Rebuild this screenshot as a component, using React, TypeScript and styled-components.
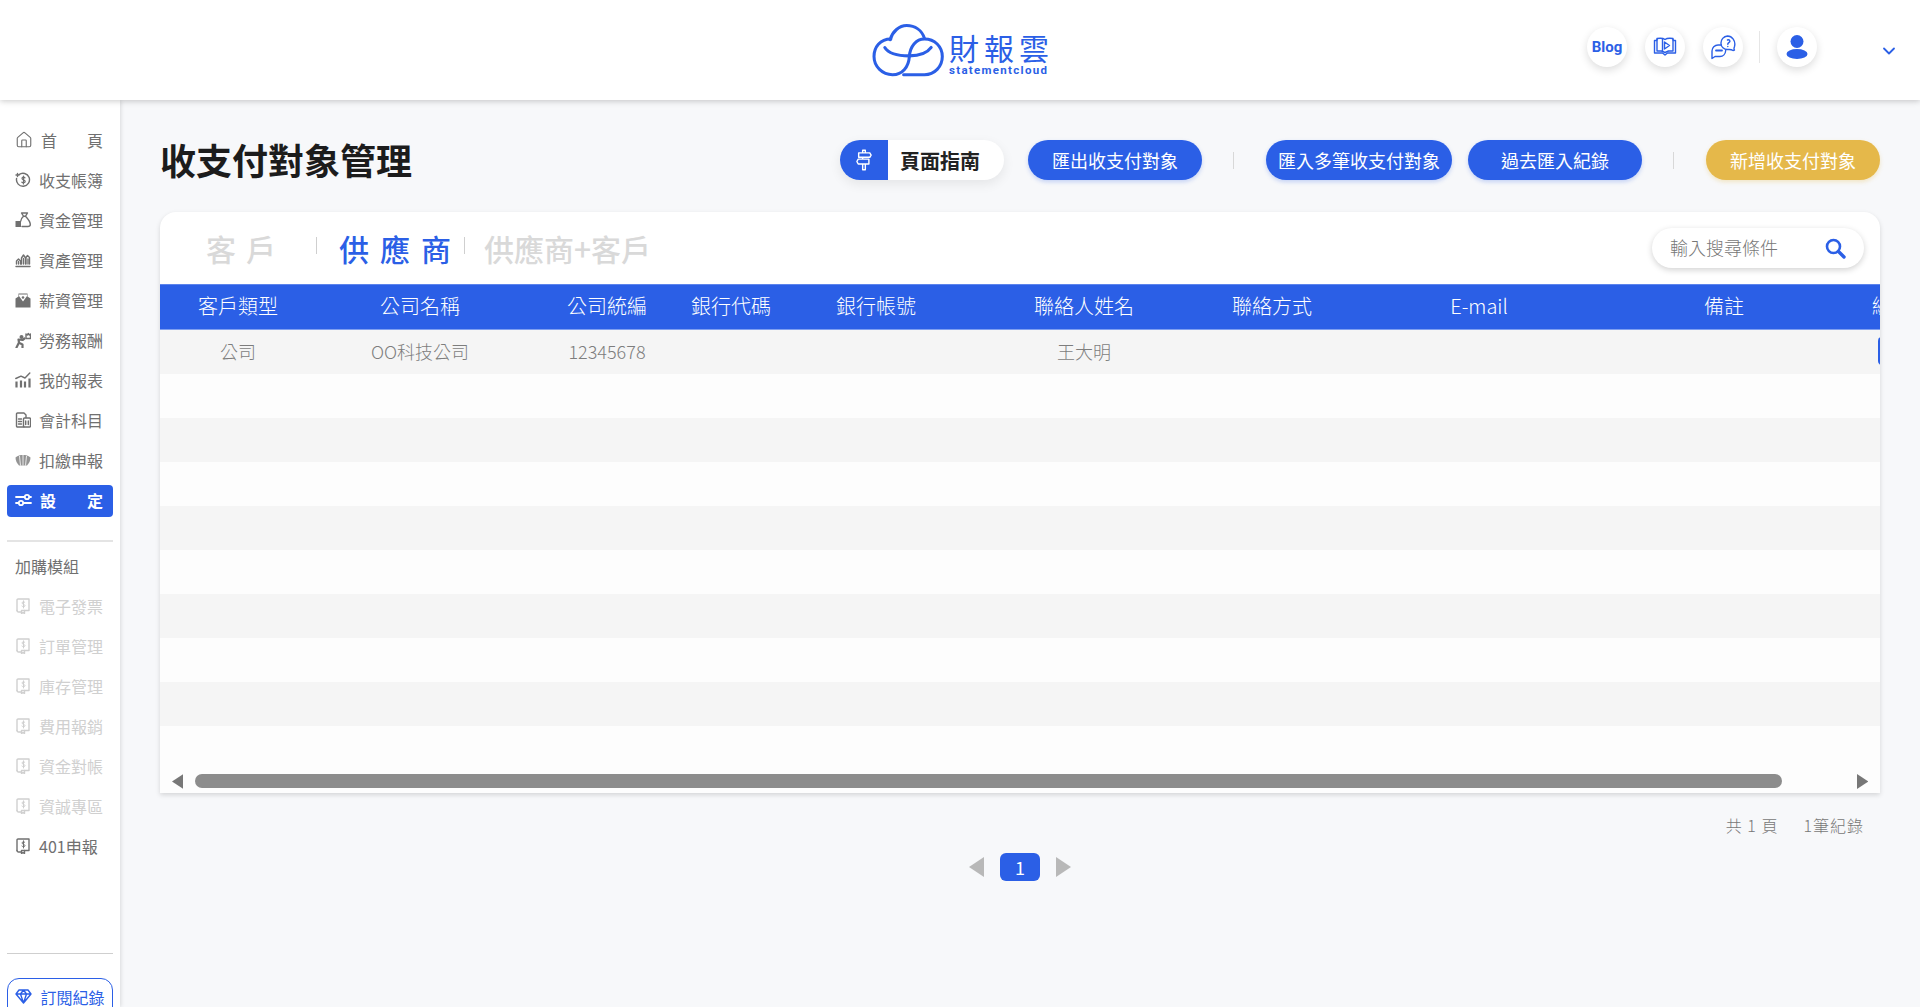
import React from 'react';
import styled, { createGlobalStyle } from 'styled-components';
import { ChevronDown, Home } from 'lucide-react';

const BLUE = '#2b5fe6';
const GOLD = '#e5b84a';

const GlobalStyle = createGlobalStyle`
  html, body {
    margin: 0;
    padding: 0;
    height: 100%;
    overflow: hidden;
    background: #f7f8fa;
    font-family: "Noto Sans CJK TC", "Noto Sans", sans-serif;
  }
  * { box-sizing: border-box; }
`;

const Page = styled.div`
  width: 1920px;
  height: 1007px;
  display: flex;
  flex-direction: column;
  overflow: hidden;
`;

const Header = styled.header`
  height: 100px;
  flex: none;
  display: flex;
  align-items: center;
  background: #fff;
  box-shadow: 0 1px 6px rgba(0, 0, 0, 0.22);
  position: relative;
  z-index: 2;
`;

const LogoLink = styled.a`
  margin-left: 872px;
  display: flex;
  align-items: center;
  gap: 5px;
  color: ${BLUE};
`;

const LogoWords = styled.div`
  display: flex;
  flex-direction: column;
  gap: 2px;
  width: 100px;
  margin-top: 8px;
`;

const LogoTitle = styled.span`
  font-size: 30px;
  line-height: 30px;
  letter-spacing: 5px;
  font-weight: 400;
  white-space: nowrap;
`;

const LogoSub = styled.span`
  font-family: Roboto, sans-serif;
  font-size: 11.5px;
  line-height: 12px;
  font-weight: 700;
  letter-spacing: 1.3px;
  white-space: nowrap;
`;

const HeaderActions = styled.div`
  margin: -6px 0 0 538px;
  display: flex;
  align-items: center;
  gap: 18px;
`;

const RoundButton = styled.button`
  width: 40px;
  height: 40px;
  border: 0;
  padding: 0;
  border-radius: 50%;
  background: #fff;
  color: ${BLUE};
  display: flex;
  align-items: center;
  justify-content: center;
  box-shadow: 0 3px 8px rgba(0, 0, 0, 0.14);
  font-family: Roboto, sans-serif;
  font-size: 15px;
  font-weight: 700;
`;

const HeaderDivider = styled.span`
  width: 1px;
  height: 32px;
  margin: 0 -1px 0 -2px;
  background: #e6e6e6;
`;

const Caret = styled(ChevronDown)`
  margin-left: 62px;
  margin-top: 2px;
  color: ${BLUE};
`;

const Body = styled.div`
  flex: 1;
  min-height: 0;
  display: flex;
`;

const Sidebar = styled.aside`
  width: 120px;
  flex: none;
  padding: 25px 7px 0;
  background: #fff;
  box-shadow: 1px 0 4px rgba(0, 0, 0, 0.12);
  overflow: hidden;
  position: relative;
  z-index: 1;
`;

const NavItem = styled.div<{ $active?: boolean; $muted?: boolean }>`
  height: 32px;
  margin: 0 0 8px;
  padding: 0 10px 2px 8px;
  display: flex;
  align-items: center;
  gap: 8px;
  border-radius: 4px;
  font-size: 16px;
  font-weight: ${(p) => (p.$active ? 700 : 400)};
  color: ${(p) => (p.$active ? '#fff' : p.$muted ? '#d0d0d0' : '#707070')};
  background: ${(p) => (p.$active ? BLUE : 'transparent')};
  svg {
    flex: none;
  }
`;

const NavLabel = styled.span<{ $spread?: boolean }>`
  white-space: nowrap;
  ${(p) => (p.$spread ? 'flex: 1; text-align-last: justify;' : '')}
`;

const NavRule = styled.hr<{ $top: number; $bottom: number; $thick?: boolean }>`
  border: 0;
  height: ${(p) => (p.$thick ? 2 : 1)}px;
  margin: ${(p) => p.$top}px 0 ${(p) => p.$bottom}px;
  background: ${(p) => (p.$thick ? '#e4e4e4' : '#cfcfcf')};
`;

const SectionLabel = styled.div`
  height: 40px;
  margin: 0 0 4px;
  padding: 0 0 2px 8px;
  display: flex;
  align-items: center;
  font-size: 16px;
  color: #707070;
`;

const SubscribeButton = styled.button`
  width: 106px;
  height: 44px;
  padding: 0 0 7px;
  display: flex;
  align-items: center;
  justify-content: center;
  gap: 8px;
  background: #fff;
  border: 1px solid ${BLUE};
  border-radius: 12px;
  color: ${BLUE};
  font-family: inherit;
  font-size: 16px;
`;

const Main = styled.main`
  flex: 1;
  min-width: 0;
  padding: 40px 40px 0;
`;

const Toolbar = styled.div`
  height: 40px;
  display: flex;
  align-items: center;
`;

const PageTitle = styled.h1`
  margin: -3px auto 0 0;
  font-size: 36px;
  line-height: 40px;
  font-weight: 700;
  color: #1c1c1c;
`;

const GuideButton = styled.button`
  width: 164px;
  height: 40px;
  margin-right: 24px;
  padding: 0;
  border: 0;
  border-radius: 20px;
  display: flex;
  align-items: center;
  overflow: hidden;
  background: #fff;
  box-shadow: 0 4px 12px rgba(0, 0, 0, 0.08);
  font-family: inherit;
  font-size: 20px;
  font-weight: 700;
  color: #222;
`;

const GuideIcon = styled.span`
  width: 48px;
  height: 40px;
  margin-right: 12px;
  display: flex;
  align-items: center;
  justify-content: center;
  background: ${BLUE};
`;

const ActionButton = styled.button<{ $gold?: boolean }>`
  min-width: 174px;
  height: 40px;
  padding: 0 12px;
  border: 0;
  border-radius: 20px;
  background: ${(p) => (p.$gold ? GOLD : BLUE)};
  color: #fff;
  font-family: inherit;
  font-size: 18px;
  font-weight: 400;
  box-shadow: 0 2px 4px ${(p) => (p.$gold ? 'rgba(229,184,74,.3)' : 'rgba(43,95,230,.25)')};
`;

const ToolDivider = styled.span`
  width: 1px;
  height: 17px;
  margin: 0 32px 0 31px;
  background: #d8d8d8;
`;

const ButtonGap = styled.span`
  width: 16px;
`;

const Card = styled.section`
  height: 581px;
  margin-top: 32px;
  display: flex;
  flex-direction: column;
  background: #fff;
  border-radius: 16px 16px 0 0;
  box-shadow: 0 2px 5px rgba(0, 0, 0, 0.14);
  overflow: hidden;
`;

const TabRow = styled.div`
  height: 72px;
  flex: none;
  padding: 0 16px 0 46px;
  display: flex;
  align-items: center;
`;

const Tab = styled.span<{ $active?: boolean; $spaced?: boolean }>`
  font-size: 30px;
  line-height: 40px;
  font-weight: 500;
  letter-spacing: ${(p) => (p.$active ? 11 : p.$spaced ? 10 : 0)}px;
  color: ${(p) => (p.$active ? BLUE : '#d9d9d9')};
  white-space: nowrap;
`;

const TabDivider = styled.span<{ $left: number; $right: number }>`
  width: 1px;
  height: 17px;
  margin: -6px ${(p) => p.$right}px 0 ${(p) => p.$left}px;
  background: #cfcfcf;
`;

const SearchBox = styled.label`
  width: 212px;
  height: 40px;
  margin-left: auto;
  padding: 0 18px;
  display: flex;
  align-items: center;
  border-radius: 20px;
  background: #fff;
  box-shadow: 0 2px 6px rgba(0, 0, 0, 0.18);
  color: ${BLUE};
`;

const SearchInput = styled.input`
  flex: 1;
  min-width: 0;
  border: 0;
  outline: 0;
  padding: 0 0 2px;
  background: transparent;
  font-family: inherit;
  font-size: 18px;
  font-weight: 300;
  &::placeholder {
    color: #777;
    opacity: 1;
  }
`;

const TableWrap = styled.div`
  flex: 1;
  min-height: 0;
  overflow: hidden;
  background: #fdfdfd;
`;

const Table = styled.table`
  width: 1818px;
  table-layout: fixed;
  border-collapse: collapse;
`;

const HeadCell = styled.th`
  height: 45px;
  padding: 0 0 4px;
  background: ${BLUE};
  border-top: 1px solid #5d84ec;
  border-bottom: 1px solid #7f9ff0;
  color: #fff;
  font-size: 20px;
  font-weight: 300;
  text-align: center;
  white-space: nowrap;
`;

const Row = styled.tr<{ $odd: boolean }>`
  background: ${(p) => (p.$odd ? '#f5f5f5' : '#fdfdfd')};
`;

const Cell = styled.td`
  height: 44px;
  padding: 0 0 2px;
  color: #7d7d7d;
  font-size: 18px;
  font-weight: 300;
  text-align: center;
  white-space: nowrap;
`;

const RowButton = styled.button`
  width: 68px;
  height: 28px;
  padding: 0;
  border: 0;
  border-radius: 4px;
  display: block;
  margin: 0 auto;
  background: ${BLUE};
  color: #fff;
  font-family: inherit;
  font-size: 14px;
`;

const ScrollBar = styled.div`
  height: 24px;
  flex: none;
  padding: 5px 12px;
  display: flex;
  align-items: center;
  background: #fdfdfd;
`;

const ScrollTrack = styled.div`
  flex: 1;
  height: 14px;
  margin: 0 75px 0 12px;
`;

const ScrollThumb = styled.div`
  height: 100%;
  border-radius: 7px;
  background: #8c8c8c;
`;

const Summary = styled.div`
  margin-top: 20px;
  padding-right: 16px;
  display: flex;
  justify-content: flex-end;
  gap: 25px;
  font-size: 16px;
  font-weight: 300;
  line-height: 24px;
  letter-spacing: 1px;
  color: #777;
`;

const Pager = styled.nav`
  margin-top: 16px;
  display: flex;
  align-items: center;
  justify-content: center;
  gap: 16px;
`;

const PageNumber = styled.button`
  width: 40px;
  height: 28px;
  padding: 0;
  border: 0;
  border-radius: 6px;
  background: ${BLUE};
  color: #fff;
  font-family: inherit;
  font-size: 18px;
  line-height: 28px;
`;

const Triangle = ({ dir, size, color }: { dir: 'l' | 'r'; size: number; color: string }) => (
  <svg width={size * 0.75} height={size} viewBox="0 0 12 16" style={{ flex: 'none' }}>
    <path d={dir === 'l' ? 'M12 0 L0 8 L12 16 Z' : 'M0 0 L12 8 L0 16 Z'} fill={color} />
  </svg>
);

const line = { fill: 'none', stroke: 'currentColor', strokeWidth: 1.4, strokeLinejoin: 'round', strokeLinecap: 'round' } as const;

const Icon = ({ children }: { children: React.ReactNode }) => (
  <svg width="16" height="16" viewBox="0 0 16 16">{children}</svg>
);

const icons: Record<string, React.ReactNode> = {
  ledger: (
    <Icon>
      <path {...line} d="M4 2.600A6.500 6.500 0 1 1 1.600 6.500" />
      <path {...line} d="M1 3h3M2.500 1.500v3" />
      <path {...line} strokeWidth={1.2} d="M10 5.800C9.400 5 7 4.800 7 6.400S10.200 7.700 10.200 9.400 7.500 11 6.800 10.100M8.500 4.200V12" />
    </Icon>
  ),
  fund: (
    <Icon>
      <path {...line} d="M6.500 1h6l-2 3.200h-2zM8.500 4.200C6.500 6 5.800 8 5.800 9M10.500 4.200C13 6.800 15.300 10 15.300 12.500c0 1.500-1 2-2.500 2H7" />
      <path fill="currentColor" d="M.5 9h5.500v6H.5z" />
    </Icon>
  ),
  asset: (
    <Icon>
      <path {...line} d="M1.500 12V9l2-2 2 2v3M6.500 12V6l2-3 2 3v6M11 12V5.500l1.500-2 2 2V12" />
      <path {...line} d="M1 14.500h14M3.500 9.500V12M8.500 6.500V12M13 7v5" />
    </Icon>
  ),
  salary: (
    <Icon>
      <path fill="currentColor" d="M.5 6.500 3.500 4.500V1.500h9v3l3 2V15.500H.5zM8 9.600 12 4V2.500H4V4z" />
      <circle cx="8" cy="5.500" r="1.300" fill="currentColor" />
    </Icon>
  ),
  labor: (
    <Icon>
      <circle cx="6.500" cy="5" r="2" fill="currentColor" />
      <path {...line} strokeWidth={2.200} d="M1.500 15.500l2.500-5L3.500 7.500l4 .5 2-1.500M4.500 11l3 1.500V15.500" />
      <path {...line} d="M11 2v4.500h4.500V2l-1.200 1-1-1.500L12.300 3z" />
    </Icon>
  ),
  report: (
    <Icon>
      <path {...line} strokeLinecap="butt" strokeWidth={2.200} d="M1.500 15.500v-6M6 15.500V8.500M10 15.500v-6M14.500 15.500V6.500" />
      <path {...line} d="M.8 6.500 6 4.200l4 1.800L14.800 1" />
    </Icon>
  ),
  account: (
    <Icon>
      <path {...line} d="M9 15H2.500a1 1 0 0 1-1-1V2a1 1 0 0 1 1-1H9l2 2v2.500" />
      <path {...line} d="M3.500 7h3M3.500 9.500h3M3.500 12h3" />
      <rect {...line} x="8.500" y="6" width="7" height="9" rx="1" />
      <path {...line} d="M10.700 9v3.500M13.300 9v3.500" />
    </Icon>
  ),
  withhold: (
    <Icon>
      <path fill="currentColor" opacity={0.75} d="M.5 5.500C3 3.500 5 3 8 3s5 .5 7.500 2.500c0 3-1.500 6-3.500 8H4C2 11.500.5 8.500.5 5.500z" />
      <path stroke="#fff" strokeWidth={0.8} fill="none" d="M4.500 4 5.500 13.500M8 3v10.500M11.500 4l-1 9.500" />
    </Icon>
  ),
  module: (
    <Icon>
      <path {...line} d="M2 12.500V2a1 1 0 0 1 1-1h11v11.500H9.500" />
      <path {...line} d="M2 12.500a1.500 1.500 0 0 0 1.500 1.500H6.500M9.500 12.500v3l-1.500-.8-1.500.8v-3z" />
      <path {...line} strokeWidth={1} d="M9.800 4.300C9.300 3.600 7 3.600 7 5S10 6.200 10 7.600 7.700 9 6.900 8.100M8.500 2.800v7.200" />
    </Icon>
  ),
  settings: (
    <svg width="17" height="16" viewBox="0 0 17 16" fill="none" stroke="#fff" strokeWidth="1.800" strokeLinecap="round">
      <path d="M1 5H9M15 5H16M1 11H3M9 11H16" />
      <circle cx="12" cy="5" r="2.200" />
      <circle cx="6" cy="11" r="2.200" />
    </svg>
  ),
  diamond: (
    <svg width="17" height="15" viewBox="0 0 17 15">
      <path {...line} d="M4 1h9l3 4-7.500 9L1 5zM1 5h15M5.500 5l3 9 3-9-3-4-3 4" />
    </svg>
  ),
};

const mainNav = [
  { label: '首頁', icon: <Home size={18} strokeWidth={1.5} />, spread: true },
  { label: '收支帳簿', icon: icons.ledger },
  { label: '資金管理', icon: icons.fund },
  { label: '資產管理', icon: icons.asset },
  { label: '薪資管理', icon: icons.salary },
  { label: '勞務報酬', icon: icons.labor },
  { label: '我的報表', icon: icons.report },
  { label: '會計科目', icon: icons.account },
  { label: '扣繳申報', icon: icons.withhold },
];

const modules = ['電子發票', '訂單管理', '庫存管理', '費用報銷', '資金對帳', '資誠專區'];

const columns = [
  { label: '客戶類型', width: 156 },
  { label: '公司名稱', width: 208 },
  { label: '公司統編', width: 166 },
  { label: '銀行代碼', width: 82 },
  { label: '銀行帳號', width: 208 },
  { label: '聯絡人姓名', width: 208 },
  { label: '聯絡方式', width: 168 },
  { label: 'E-mail', width: 246 },
  { label: '備註', width: 244 },
  { label: '編輯功能', width: 132 },
];

const firstRow = ['公司', 'OO科技公司', '12345678', '', '', '王大明', '', '', ''];

function CloudLogo() {
  return (
    <svg width="72" height="53" viewBox="94 74 214 156">
      <g fill="none" stroke={BLUE} strokeWidth="9" strokeLinecap="round">
        <path d="M150 118C118 118 100 142 100 170C100 200 125 224 155 224C185 224 203 200 205 170C207 140 225 118 250 118C280 118 303 140 303 170C303 200 280 224 250 224L188 224" />
        <path d="M148 120C155 95 175 78 197 78C222 78 242 92 250 116" />
        <path d="M132 143C145 165 175 168 205 168C235 168 258 160 270 143" />
      </g>
    </svg>
  );
}

function BookVideoIcon() {
  return (
    <svg width="24" height="20" viewBox="0 0 24 20" fill="none" stroke={BLUE} strokeWidth="1.400" strokeLinejoin="round">
      <path d="M4 3.500V1.500C7 1 10 1 12 2.500C14 1 17 1 20 1.500V3.500" />
      <path d="M4 3.500H1.500V16H9.500L12 18L14.500 16H22.500V3.500H20" />
      <path d="M4 2V14H8.500L12 15.500L15.500 14H20V2" />
      <path d="M9.500 2V14.500" />
      <path d="M11.500 5V12L16.500 8.500Z" />
    </svg>
  );
}

function HelpChatIcon() {
  return (
    <svg width="25" height="25" viewBox="0 0 25 25" fill="none" stroke={BLUE} strokeWidth="1.400" strokeLinejoin="round" strokeLinecap="round">
      <path d="M16.500 1A7 7 0 0 0 10 8.500C10 12 13 14.500 16.500 14.500C18 14.500 20 14 22 15.500L23.500 15C22.500 14 23 13 23.500 11.500C25 6 21 1 16.500 1Z" />
      <path d="M16.500 5C18.200 4 19.500 5.800 18.500 7C17.800 7.800 16.800 8 16.800 9.300M16.800 11.500V11.600" strokeWidth="1.500" />
      <path d="M10 10H7A6 6 0 0 0 1 16V23.500L4 21.500H9C12 21.500 14.500 19 14.800 15" />
      <path d="M5 15.500H11" strokeWidth="1.800" />
    </svg>
  );
}

function UserIcon() {
  return (
    <svg width="22" height="24" viewBox="0 0 22 24" fill={BLUE}>
      <circle cx="11" cy="6.500" r="6.500" />
      <ellipse cx="11" cy="19" rx="10.500" ry="5" />
    </svg>
  );
}

function SignpostIcon() {
  return (
    <svg width="16" height="22" viewBox="0 0 18 24" fill="none" stroke="#fff" strokeWidth="1.600" strokeLinejoin="round">
      <path d="M7.500 1H10.500V4H7.500ZM3 4H15.500L17 6.500L15.500 9H3ZM7.500 9V11M2.500 11H14.500V16.500H2.500L1 13.700ZM7.500 16.500H10.500V23H7.500Z" />
    </svg>
  );
}

function SearchIcon() {
  return (
    <svg width="21" height="21" viewBox="0 0 21 21" fill="none" stroke="currentColor" strokeLinecap="round">
      <circle cx="8.500" cy="8.500" r="6.500" strokeWidth="2.600" />
      <path d="M13.500 13.500L19 19" strokeWidth="3.400" />
    </svg>
  );
}

export default function App() {
  return (
    <Page>
      <GlobalStyle />
      <Header>
        <LogoLink>
          <CloudLogo />
          <LogoWords>
            <LogoTitle>財報雲</LogoTitle>
            <LogoSub>statementcloud</LogoSub>
          </LogoWords>
        </LogoLink>
        <HeaderActions>
          <RoundButton>Blog</RoundButton>
          <RoundButton><BookVideoIcon /></RoundButton>
          <RoundButton><HelpChatIcon /></RoundButton>
          <HeaderDivider />
          <RoundButton><UserIcon /></RoundButton>
        </HeaderActions>
        <Caret size={20} strokeWidth={2.2} />
      </Header>
      <Body>
        <Sidebar>
          {mainNav.map((item) => (
            <NavItem key={item.label}>
              {item.icon}
              <NavLabel $spread={item.spread}>{item.label}</NavLabel>
            </NavItem>
          ))}
          <NavItem $active>
            {icons.settings}
            <NavLabel $spread>設定</NavLabel>
          </NavItem>
          <NavRule $thick $top={23} $bottom={5} />
          <SectionLabel>加購模組</SectionLabel>
          {modules.map((label) => (
            <NavItem key={label} $muted>
              {icons.module}
              <NavLabel>{label}</NavLabel>
            </NavItem>
          ))}
          <NavItem>
            {icons.module}
            <NavLabel>401申報</NavLabel>
          </NavItem>
          <NavRule $top={90} $bottom={24} />
          <SubscribeButton>
            {icons.diamond}
            訂閱紀錄
          </SubscribeButton>
        </Sidebar>
        <Main>
          <Toolbar>
            <PageTitle>收支付對象管理</PageTitle>
            <GuideButton>
              <GuideIcon><SignpostIcon /></GuideIcon>
              頁面指南
            </GuideButton>
            <ActionButton>匯出收支付對象</ActionButton>
            <ToolDivider />
            <ActionButton>匯入多筆收支付對象</ActionButton>
            <ButtonGap />
            <ActionButton>過去匯入紀錄</ActionButton>
            <ToolDivider />
            <ActionButton $gold>新增收支付對象</ActionButton>
          </Toolbar>
          <Card>
            <TabRow>
              <Tab $spaced>客戶</Tab>
              <TabDivider $left={30} $right={22} />
              <Tab $active>供應商</Tab>
              <TabDivider $left={2} $right={19} />
              <Tab>供應商+客戶</Tab>
              <SearchBox>
                <SearchInput placeholder="輸入搜尋條件" />
                <SearchIcon />
              </SearchBox>
            </TabRow>
            <TableWrap>
              <Table>
                <colgroup>
                  {columns.map((c) => (
                    <col key={c.label} style={{ width: c.width }} />
                  ))}
                </colgroup>
                <thead>
                  <tr>
                    {columns.map((c) => (
                      <HeadCell key={c.label}>{c.label}</HeadCell>
                    ))}
                  </tr>
                </thead>
                <tbody>
                  {Array.from({ length: 9 }, (_, i) => (
                    <Row key={i} $odd={i % 2 === 0}>
                      {columns.map((c, j) => (
                        <Cell key={c.label}>
                          {i === 0 && firstRow[j]}
                          {i === 0 && j === 9 && <RowButton>編輯</RowButton>}
                        </Cell>
                      ))}
                    </Row>
                  ))}
                </tbody>
              </Table>
            </TableWrap>
            <ScrollBar>
              <Triangle dir="l" size={15} color="#777" />
              <ScrollTrack>
                <ScrollThumb />
              </ScrollTrack>
              <Triangle dir="r" size={15} color="#777" />
            </ScrollBar>
          </Card>
          <Summary>
            <span>共 1 頁</span>
            <span>1筆紀錄</span>
          </Summary>
          <Pager>
            <Triangle dir="l" size={20} color="#b8b8b8" />
            <PageNumber>1</PageNumber>
            <Triangle dir="r" size={20} color="#b8b8b8" />
          </Pager>
        </Main>
      </Body>
    </Page>
  );
}
